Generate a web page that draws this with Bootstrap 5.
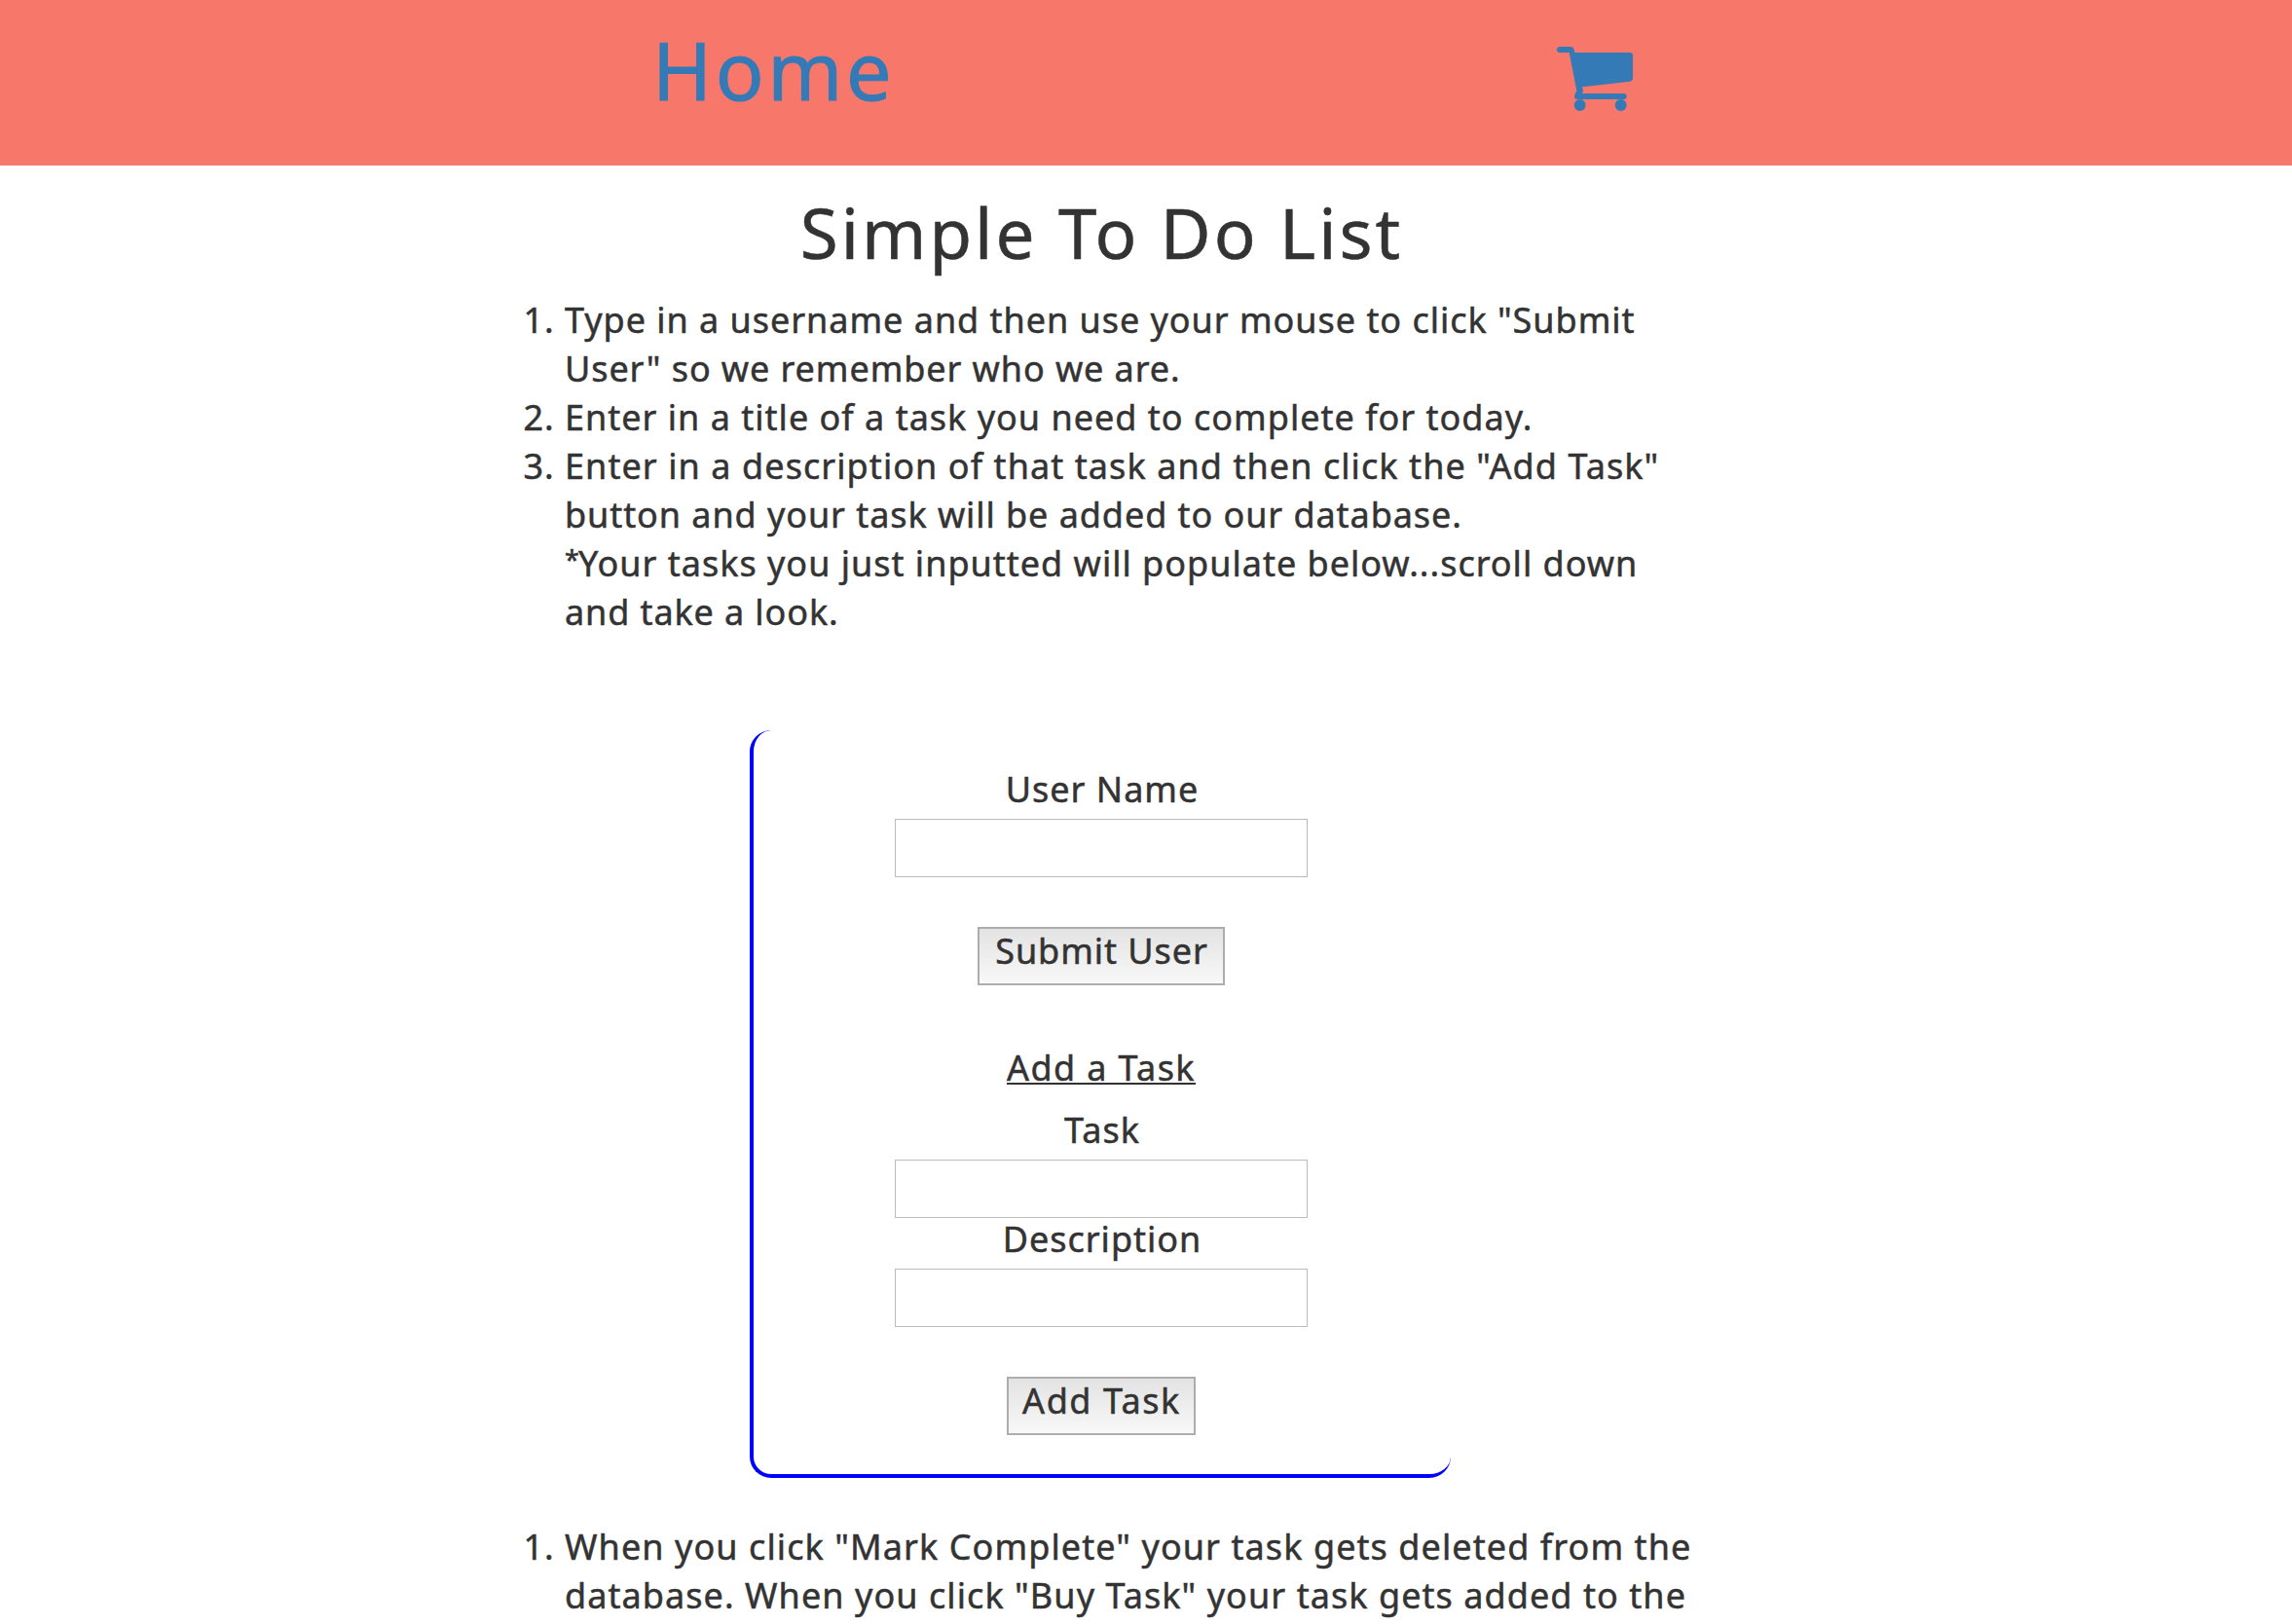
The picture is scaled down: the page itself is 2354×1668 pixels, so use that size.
<!DOCTYPE html>
<html lang="en">
<head>
<meta charset="utf-8">
<meta name="viewport" content="width=device-width, initial-scale=1">
<title>Simple To Do List</title>
<link href="https://cdn.jsdelivr.net/npm/bootstrap@5.3.0/dist/css/bootstrap.min.css" rel="stylesheet">
<style>
  body { font-family: "Noto Sans", sans-serif; font-size: 36px; line-height: 50px; color: #333; background: #fff; -webkit-text-stroke: .5px currentColor; }
  .site-bar { height: 170px; background: #f7786b; padding: 0 677px 0 670px; }
  .home-link { color: #337ab7; font-size: 82.5px; line-height: 142px; letter-spacing: 3.6px; -webkit-text-stroke: 1px currentColor; }
  .cart-link { color: #337ab7; margin-top: 48px; line-height: 0; -webkit-text-stroke: 0; }
  .todo-main { width: 1260px; margin-left: 500px; }
  .todo-title { font-size: 71px; line-height: 78px; letter-spacing: 3px; margin: 30px 0 26px; padding-left: 3px; font-weight: 400; }
  .steps { padding-left: 80px; white-space: nowrap; letter-spacing: 1px; }
  .t1 { letter-spacing: .967px; } .t2 { letter-spacing: .916px; } .t3 { letter-spacing: 1.005px; }
  .t4 { letter-spacing: 1.073px; } .t5 { letter-spacing: .93px; } .t6 { letter-spacing: 1px; }
  .t7 { letter-spacing: .89px; } .t8 { letter-spacing: 1.08px; } .t9 { letter-spacing: 1.063px; }
  .star { font-size: 27px; line-height: 0; vertical-align: 7px; letter-spacing: -1px; }
  .task-box { width: 720px; height: 768px; margin: 96px 0 46px 270px; padding: 41px 2px 0 0; border: solid #00f; border-width: 0 0 4px 4px; border-radius: 22px; }
  .field-label { line-height: 40px; margin-bottom: 10px; padding-left: 2px; letter-spacing: 1px; }
  .desc-label { margin-top: 2px; }
  .field-input { width: 424px; height: 60px; border: 1px solid #bbb; border-radius: 0; padding: 4px 10px; }
  .push-btn { height: 60px; margin-top: 51px; border: 2px solid #adadad; border-radius: 0; padding: 0 0 10px; font-size: 36px; line-height: 46px; color: #333; background: linear-gradient(#e3e3e3, #f8f8f8); -webkit-text-stroke: .5px currentColor; }
  .user-btn { width: 254px; letter-spacing: .95px; padding-left: 1px; }
  .add-btn { width: 194px; letter-spacing: 1.54px; padding-left: 1px; }
  .task-heading { margin: 65px 0 24px; line-height: 40px; letter-spacing: 1.39px; text-decoration-line: underline; text-decoration-thickness: 2px; text-underline-offset: 2px; text-decoration-skip-ink: none; }
</style>
</head>
<body>
<header class="site-bar d-flex justify-content-between align-items-start">
  <a class="home-link text-decoration-none" href="#">Home</a>
  <a class="cart-link" href="#" aria-label="Cart">
    <svg width="78" height="66" viewBox="117 84 234 198" fill="currentColor">
      <path d="M126 84H160Q168 84 170 92L172 102H341Q351 102 351 112V181Q351 190 342 191L195 208V211Q200 217 195 228H323Q332 228 332 237Q332 246 323 246H180Q171 246 171 237Q171 232 178 220L155 102H126Q117 102 117 93Q117 84 126 84Z"/>
      <circle cx="188" cy="264" r="18"/><circle cx="314" cy="264" r="18"/>
    </svg>
  </a>
</header>
<main class="todo-main">
  <h1 class="todo-title text-center">Simple To Do List</h1>
  <ol class="steps mb-0">
    <li><span class="t1">Type in a username and then use your mouse to click "Submit</span><br><span class="t2">User" so we remember who we are.</span></li>
    <li><span class="t3">Enter in a title of a task you need to complete for today.</span></li>
    <li><span class="t4">Enter in a description of that task and then click the "Add Task"</span><br><span class="t5">button and your task will be added to our database.</span><br><span class="t6"><span class="star">*</span>Your tasks you just inputted will populate below...scroll down</span><br><span class="t7">and take a look.</span></li>
  </ol>
  <form class="task-box d-flex flex-column align-items-center">
    <label class="field-label" for="user">User Name</label>
    <input class="field-input form-control" id="user" type="text">
    <button class="push-btn user-btn" type="button">Submit User</button>
    <div class="task-heading">Add a Task</div>
    <label class="field-label" for="task">Task</label>
    <input class="field-input form-control" id="task" type="text">
    <label class="field-label desc-label" for="desc">Description</label>
    <input class="field-input form-control" id="desc" type="text">
    <button class="push-btn add-btn" type="button">Add Task</button>
  </form>
  <ol class="steps mb-0">
    <li><span class="t8">When you click "Mark Complete" your task gets deleted from the</span><br><span class="t9">database. When you click "Buy Task" your task gets added to the</span></li>
  </ol>
</main>
<script src="https://cdn.jsdelivr.net/npm/bootstrap@5.3.0/dist/js/bootstrap.bundle.min.js"></script>
</body>
</html>
